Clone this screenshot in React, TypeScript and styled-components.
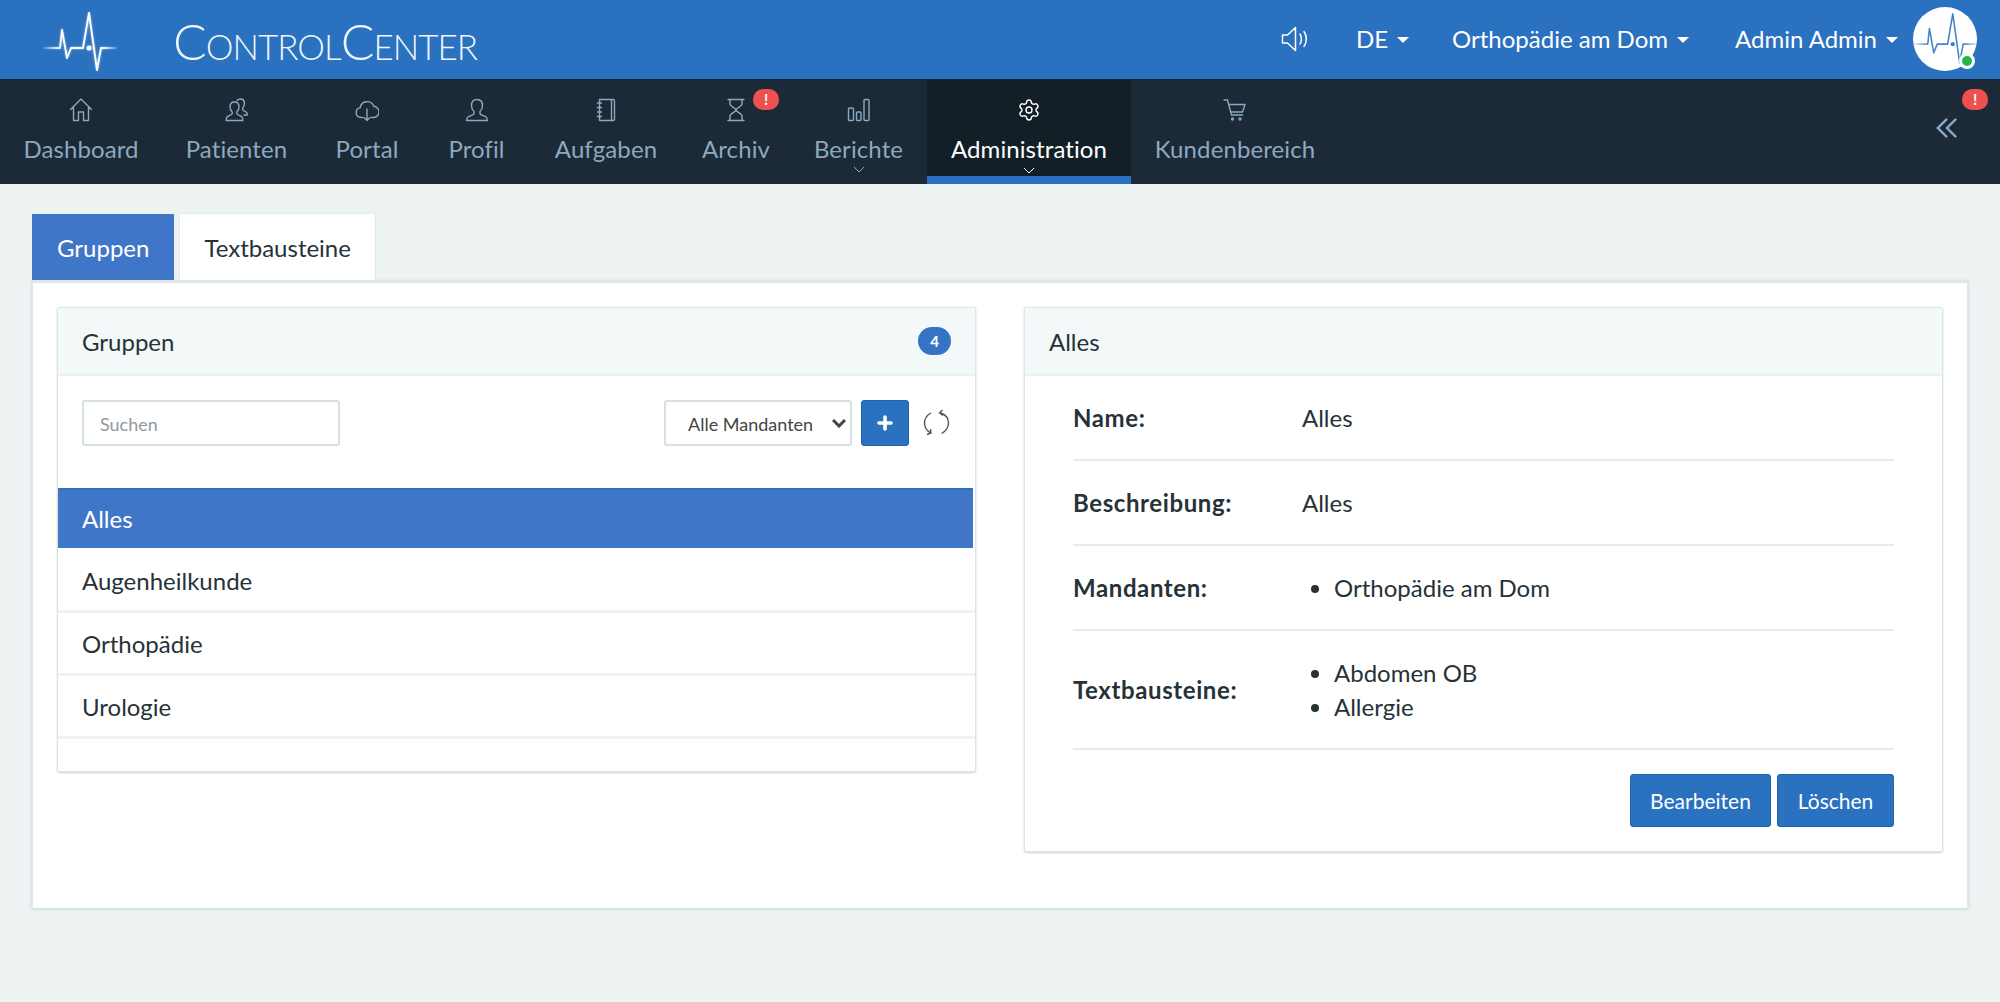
import React from 'react'
import styled, { createGlobalStyle } from 'styled-components'
import { Settings } from 'lucide-react'

const GlobalStyle = createGlobalStyle`
  html, body {
    margin: 0;
    padding: 0;
    background: #edf3f3;
    font-family: Lato, "Noto Sans", sans-serif;
    color: #263238;
  }
  * { box-sizing: border-box; }
`

const Page = styled.div`
  min-height: 1002px;
  display: flex;
  flex-direction: column;
`

const TopBar = styled.header`
  height: 80px;
  background: #2a71bf;
  border-bottom: 1px solid #12222e;
  display: flex;
  align-items: center;
  padding: 0 23px 2px 43px;
  color: #fff;
`

const LogoMark = styled.span`
  display: flex;
  margin-top: 5px;
  filter: drop-shadow(0 0 1px rgba(255, 255, 255, 0.6));
`

const LogoText = styled.div`
  margin: 4px 0 0 56px;
  font-size: 50px;
  font-weight: 300;
  font-variant: small-caps;
  letter-spacing: -1px;
  line-height: 1;
  color: #eef5fb;
`

const TopRight = styled.div`
  margin-left: auto;
  display: flex;
  align-items: center;
  font-size: 24px;
`

const TopLink = styled.div<{ $gap: number }>`
  display: flex;
  align-items: center;
  gap: 9px;
  margin-left: ${(p) => p.$gap}px;
`

const Caret = styled.span`
  width: 0;
  height: 0;
  border-left: 6px solid transparent;
  border-right: 6px solid transparent;
  border-top: 6px solid #fff;
  margin-top: 3px;
`

const Avatar = styled.div`
  position: relative;
  width: 64px;
  height: 64px;
  margin-left: 15px;
  border-radius: 50%;
  background: #fff;
  display: flex;
  align-items: center;
  justify-content: center;
`

const OnlineDot = styled.span`
  position: absolute;
  right: 2px;
  bottom: 2px;
  width: 16px;
  height: 16px;
  border-radius: 50%;
  background: #1fb94a;
  border: 3px solid #fff;
`

const NavBar = styled.nav`
  height: 104px;
  background: #1b2a36;
  display: flex;
`

const NavItem = styled.a<{ $width: number; $active?: boolean }>`
  position: relative;
  flex: none;
  width: ${(p) => p.$width}px;
  display: flex;
  flex-direction: column;
  align-items: center;
  padding-top: 18px;
  font-size: 24px;
  letter-spacing: 0.1px;
  line-height: 30px;
  color: ${(p) => (p.$active ? '#fff' : '#8ba9c0')};
  background: ${(p) => (p.$active ? '#131f27' : 'transparent')};
  border-bottom: ${(p) => (p.$active ? '8px solid #2a71bf' : '0')};
`

const NavIcon = styled.span`
  height: 24px;
  margin-bottom: 12px;
  display: flex;
  align-items: center;
  justify-content: center;
`

const AlertBadge = styled.span`
  position: absolute;
  top: 9px;
  width: 26px;
  height: 21px;
  border-radius: 10px;
  background: #ee5050;
  color: #fff;
  font-size: 15px;
  font-weight: 700;
  letter-spacing: 0;
  line-height: 21px;
  text-align: center;
`

const ArchivBadge = styled(AlertBadge)`
  left: 71px;
`

const CollapseBox = styled.div`
  position: relative;
  margin-left: auto;
  width: 65px;
  display: flex;
  padding: 37px 0 0 1px;
`

const CollapseBadge = styled(AlertBadge)`
  right: 12px;
`

const Chevron = styled.svg<{ $bottom: number }>`
  position: absolute;
  left: 50%;
  margin-left: -6px;
  bottom: ${(p) => p.$bottom}px;
`

const Main = styled.main`
  padding: 29px 32px 0;
`

const Tabs = styled.div`
  display: flex;
  gap: 5px;
  align-items: flex-end;
`

const Tab = styled.div<{ $active?: boolean }>`
  height: ${(p) => (p.$active ? 66 : 67)}px;
  padding: 0 24px;
  display: flex;
  align-items: center;
  font-size: 24px;
  background: ${(p) => (p.$active ? '#3f76c8' : '#fff')};
  color: ${(p) => (p.$active ? '#fff' : '#263238')};
  border: 1px solid ${(p) => (p.$active ? '#3f76c8' : '#e2ecec')};
  border-bottom: 0;
`

const Card = styled.div`
  background: #fff;
  border-top: 3px solid #dde8e8;
  border-left: 1px solid #e2ecec;
  border-right: 1px solid #e2ecec;
  box-shadow: 0 1px 3px rgba(120, 150, 160, 0.4);
  height: 628px;
  padding: 24px 24px 0;
  display: grid;
  grid-template-columns: 919px 1fr;
  column-gap: 48px;
  align-items: start;
`

const Panel = styled.section`
  background: #fff;
  border: 1px solid #dbe6e8;
  border-radius: 2px;
  box-shadow: 0 1px 2px rgba(120, 150, 160, 0.4);
`

const PanelHead = styled.div`
  height: 68px;
  background: #f3f8f8;
  border-bottom: 2px solid #eaf1f1;
  padding: 0 24px;
  display: flex;
  align-items: center;
  justify-content: space-between;
  font-size: 24px;
`

const CountBadge = styled.span`
  width: 33px;
  height: 28px;
  border-radius: 14px;
  background: #3673c4;
  color: #fff;
  font-size: 15px;
  font-weight: 700;
  display: flex;
  align-items: center;
  justify-content: center;
`

const Toolbar = styled.div`
  display: flex;
  align-items: center;
  padding: 24px 25px 42px 24px;
`

const SearchInput = styled.input`
  width: 258px;
  height: 46px;
  padding: 1px 16px 0;
  border: 2px solid #d5e1e3;
  border-radius: 3px;
  font-family: inherit;
  font-size: 18px;
  color: #263238;
  &::placeholder { color: #8f9a9e; }
`

const FilterBox = styled.div`
  position: relative;
  margin-left: auto;
  display: flex;
  color: #444;
`

const Filter = styled.select`
  appearance: none;
  width: 188px;
  height: 46px;
  padding: 1px 28px 0 22px;
  background: #fff;
  border: 2px solid #d5e1e3;
  border-radius: 3px;
  font-family: inherit;
  font-size: 18px;
  color: #444;
`

const FilterArrow = styled.svg`
  position: absolute;
  right: 6px;
  top: 19px;
`

const AddButton = styled.button`
  width: 48px;
  height: 46px;
  margin: 0 14px 0 9px;
  padding: 0;
  background: #2a71bf;
  border: 1px solid #1f62ad;
  border-radius: 3px;
  display: flex;
  align-items: center;
  justify-content: center;
`

const GroupList = styled.ul`
  list-style: none;
  margin: 0;
  padding: 0 0 32px;
`

const GroupItem = styled.li<{ $active?: boolean }>`
  height: ${(p) => (p.$active ? 60 : 63)}px;
  padding: 0 24px ${(p) => (p.$active ? 2 : 0)}px;
  display: flex;
  align-items: center;
  font-size: 24px;
  margin-right: ${(p) => (p.$active ? 2 : 0)}px;
  margin-bottom: ${(p) => (p.$active ? 2 : 0)}px;
  background: ${(p) => (p.$active ? '#3f76c8' : '#fff')};
  color: ${(p) => (p.$active ? '#fff' : '#263238')};
  border-top: ${(p) => (p.$active ? '2px solid #2a71bf' : '0')};
  border-bottom: ${(p) => (p.$active ? '0' : '3px solid #eef3f3')};
`

const Detail = styled.div`
  padding: 0 48px 24px;
`

const DetailRow = styled.div<{ $height: number }>`
  height: ${(p) => p.$height}px;
  display: grid;
  grid-template-columns: 229px 1fr;
  align-items: center;
  border-bottom: 2px solid #e3ecee;
  font-size: 24px;
`

const Label = styled.div`
  font-weight: 700;
  letter-spacing: 0.6px;
`

const Bullets = styled.ul`
  margin: 0;
  padding: 0 0 0 32px;
  line-height: 34px;
`

const Actions = styled.div`
  display: flex;
  justify-content: flex-end;
  gap: 6px;
  padding-top: 24px;
`

const ActionButton = styled.button<{ $width: number }>`
  width: ${(p) => p.$width}px;
  height: 53px;
  padding: 0;
  background: #2a71bf;
  border: 1px solid #1f62ad;
  border-radius: 3px;
  color: #fff;
  font-family: inherit;
  font-size: 21px;
`

const Line = styled.svg`
  display: block;
  fill: none;
  stroke: currentColor;
  stroke-width: 1.4;
  stroke-linejoin: round;
  stroke-linecap: round;
`

const icons: Record<string, React.ReactNode> = {
  home: <path d="M1.500 11.500 12 1l10.500 10.500M4.500 9.500v13h5V14h5v8.500h5v-13" />,
  users: (
    <>
      <path d="M9.500 4C6.600 4 5 6.200 5 9c0 2 .9 3.800 2.200 5v1.800c0 .9-3.200 1.700-4.800 2.800-.9.600-1.200 1.500-1.200 3.900h16.600c0-2.400-.3-3.300-1.200-3.900-1.600-1.100-4.800-1.900-4.800-2.800V14c1.300-1.200 2.200-3 2.200-5 0-2.800-1.600-5-4.500-5z" />
      <path d="M12 2.500C13 1.300 14.200 1 15.300 1c2.700 0 4.200 2.100 4.200 4.600 0 1.900-.8 3.500-1.800 4.500v1.700c0 .8 2.600 1.600 3.600 2.500.8.700 1.200 1.500.9 2.700h-3.400" />
    </>
  ),
  portal: <path d="M7.500 19.500H6a5 5 0 0 1-.8-9.900A7 7 0 0 1 18.700 8.300 5.600 5.600 0 0 1 18 19.500h-1.500M12 11v11.500M9 19.500l3 3 3-3" />,
  user: <path d="M12 1.500C8.400 1.500 6.500 4.200 6.500 7.500c0 2.400 1 4.600 2.500 6v2.200c0 1-4 2-6 3.300-1 .7-1.300 1.800-1.300 3.500h20.600c0-1.700-.3-2.800-1.300-3.500-2-1.300-6-2.300-6-3.300v-2.200c1.500-1.400 2.500-3.600 2.500-6 0-3.300-1.900-6-5.500-6z" />,
  book: <path d="M5.500 1.500h13.500a1.500 1.500 0 0 1 1.500 1.500v18a1.500 1.500 0 0 1-1.500 1.500H5.500zM17.500 1.500v21M3.500 5h4M3.500 9.500h4M3.500 14h4M3.500 18.500h4" />,
  hourglass: <path d="M4 1.500h16M4 22.500h16M6 1.500V6c0 2.500 6 4 6 6s-6 3.500-6 6v4.500M18 1.500V6c0 2.500-6 4-6 6s6 3.500 6 6v4.500" />,
  bars: (
    <>
      <rect x="1.500" y="10" width="5" height="12.500" rx="1" />
      <rect x="9.500" y="14" width="4.500" height="8.500" rx="1" />
      <rect x="17" y="1.500" width="5" height="21" rx="1" />
    </>
  ),
  cart: (
    <>
      <path d="M1 2h3.500l4 15h11M6 6.500h16l-2.500 7.500H7.700" />
      <circle cx="9.500" cy="21" r="1" />
      <circle cx="17" cy="21" r="1" />
    </>
  ),
}

const Icon = ({ name, size = 24 }: { name: string; size?: number }) => (
  <Line width={size} height={size} viewBox="0 0 24 24">
    {icons[name]}
  </Line>
)

const Pulse = ({ width, color, id }: { width: number; color: string; id: string }) => (
  <svg width={width} height={(width * 59) / 74} viewBox="0 0 74 59" fill="none">
    <defs>
      <linearGradient id={id} x1="0" x2="74" y1="0" y2="0" gradientUnits="userSpaceOnUse">
        <stop offset="0" stopColor={color} stopOpacity="0.1" />
        <stop offset="0.25" stopColor={color} />
        <stop offset="0.8" stopColor={color} />
        <stop offset="1" stopColor={color} stopOpacity="0.1" />
      </linearGradient>
    </defs>
    <path
      d="M0 36H17L19 18 24 46 28 36H40L46 1 54 58 58 36H74"
      stroke={`url(#${id})`}
      strokeWidth="1.800"
      strokeLinejoin="round"
    />
    <circle cx="46" cy="36" r="2.500" fill={color} />
  </svg>
)

const SmallChevron = ({ bottom }: { bottom: number }) => (
  <Chevron $bottom={bottom} width="12" height="7" viewBox="0 0 12 7" fill="none" stroke="currentColor" strokeWidth="1">
    <path d="M1 1l5 5 5-5" />
  </Chevron>
)

export default function App() {
  return (
    <Page>
      <GlobalStyle />
      <TopBar>
        <LogoMark>
          <Pulse width={74} color="#ffffff" id="logo-pulse" />
        </LogoMark>
        <LogoText>ControlCenter</LogoText>
        <TopRight>
          <svg width="28" height="26" viewBox="0 0 28 26" fill="none" stroke="#fff" strokeWidth="1.500" strokeLinejoin="round" strokeLinecap="round">
            <path d="M1.500 9v8h5l8 7.500V1.500L6.500 9zM19 8c1.800 2.500 1.800 7.500 0 10M23 5.500c3 4 3 11 0 15" />
          </svg>
          <TopLink $gap={47}>DE<Caret /></TopLink>
          <TopLink $gap={43}>Orthopädie am Dom<Caret /></TopLink>
          <TopLink $gap={46}>Admin Admin<Caret /></TopLink>
          <Avatar>
            <Pulse width={64} color="#3f85c9" id="avatar-pulse" />
            <OnlineDot />
          </Avatar>
        </TopRight>
      </TopBar>
      <NavBar>
        <NavItem $width={162}><NavIcon><Icon name="home" /></NavIcon>Dashboard</NavItem>
        <NavItem $width={149}><NavIcon><Icon name="users" /></NavIcon>Patienten</NavItem>
        <NavItem $width={112}><NavIcon><Icon name="portal" /></NavIcon>Portal</NavItem>
        <NavItem $width={107}><NavIcon><Icon name="user" /></NavIcon>Profil</NavItem>
        <NavItem $width={152}><NavIcon><Icon name="book" /></NavIcon>Aufgaben</NavItem>
        <NavItem $width={108}>
          <NavIcon><Icon name="hourglass" /></NavIcon>Archiv
          <ArchivBadge>!</ArchivBadge>
        </NavItem>
        <NavItem $width={137}>
          <NavIcon><Icon name="bars" /></NavIcon>Berichte
          <SmallChevron bottom={11} />
        </NavItem>
        <NavItem $width={204} $active>
          <NavIcon><Settings size={24} strokeWidth={1.400} /></NavIcon>Administration
          <SmallChevron bottom={2} />
        </NavItem>
        <NavItem $width={208}><NavIcon><Icon name="cart" /></NavIcon>Kundenbereich</NavItem>
        <CollapseBox>
          <svg width="22" height="22" viewBox="0 0 24 24" fill="none" stroke="#8ba9c0" strokeWidth="2.600">
            <path d="M12 2 2 12l10 10M22 2 12 12l10 10" />
          </svg>
          <CollapseBadge>!</CollapseBadge>
        </CollapseBox>
      </NavBar>
      <Main>
        <Tabs>
          <Tab $active>Gruppen</Tab>
          <Tab>Textbausteine</Tab>
        </Tabs>
        <Card>
          <Panel>
            <PanelHead>
              Gruppen
              <CountBadge>4</CountBadge>
            </PanelHead>
            <Toolbar>
              <SearchInput placeholder="Suchen" />
              <FilterBox>
                <Filter defaultValue="all">
                  <option value="all">Alle Mandanten</option>
                </Filter>
                <FilterArrow width="14" height="9" viewBox="0 0 14 9" fill="none" stroke="currentColor" strokeWidth="3">
                  <path d="M1 1l6 6 6-6" />
                </FilterArrow>
              </FilterBox>
              <AddButton>
                <svg width="16" height="16" viewBox="0 0 16 16" fill="none" stroke="#fff" strokeWidth="3.600" strokeLinecap="round">
                  <path d="M8 2v12M2 8h12" />
                </svg>
              </AddButton>
              <svg width="27" height="28" viewBox="0 0 27 28" fill="none" stroke="#555" strokeWidth="1.400">
                <path d="M8 4C3.500 6.500 1.500 10.500 1.500 14c0 4 2.500 8 6.500 10M4 25.500 8 24l-.500-4M18 4c5 2 7.500 6 7.500 10 0 4-2.500 8-7 10.500M19.500 1 16.500 4l3.500 2.500" />
              </svg>
            </Toolbar>
            <GroupList>
              <GroupItem $active>Alles</GroupItem>
              <GroupItem>Augenheilkunde</GroupItem>
              <GroupItem>Orthopädie</GroupItem>
              <GroupItem>Urologie</GroupItem>
            </GroupList>
          </Panel>
          <Panel>
            <PanelHead>Alles</PanelHead>
            <Detail>
              <DetailRow $height={85}><Label>Name:</Label><div>Alles</div></DetailRow>
              <DetailRow $height={85}><Label>Beschreibung:</Label><div>Alles</div></DetailRow>
              <DetailRow $height={85}>
                <Label>Mandanten:</Label>
                <Bullets><li>Orthopädie am Dom</li></Bullets>
              </DetailRow>
              <DetailRow $height={119}>
                <Label>Textbausteine:</Label>
                <Bullets>
                  <li>Abdomen OB</li>
                  <li>Allergie</li>
                </Bullets>
              </DetailRow>
              <Actions>
                <ActionButton $width={141}>Bearbeiten</ActionButton>
                <ActionButton $width={117}>Löschen</ActionButton>
              </Actions>
            </Detail>
          </Panel>
        </Card>
      </Main>
    </Page>
  )
}
